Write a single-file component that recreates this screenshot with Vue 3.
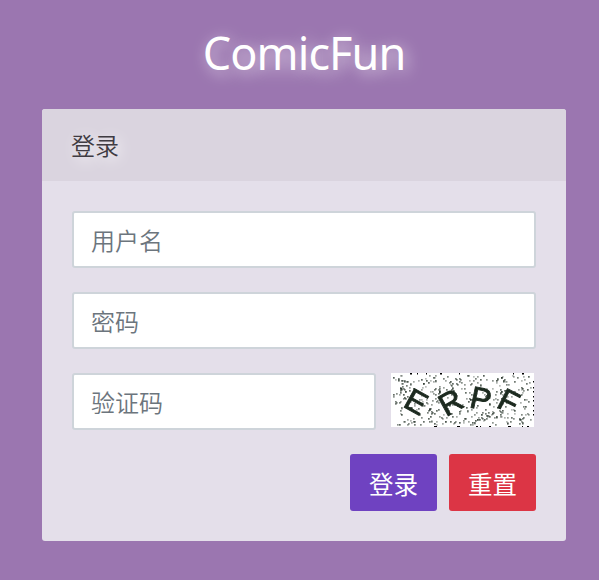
<script setup>
import { ref } from 'vue'

const username = ref('')
const password = ref('')
const code = ref('')

// x / y is the centre of each glyph, rotation in degrees
const glyphs = [
  { char: 'E', x: 25.5, y: 28.5, angle: 29 },
  { char: 'R', x: 59.5, y: 29, angle: -29 },
  { char: 'P', x: 90, y: 25.5, angle: 12 },
  { char: 'F', x: 118, y: 28, angle: 27 },
]

let seed = 7919
function random() {
  seed = (seed * 16807) % 2147483647
  return seed / 2147483647
}

const specks = Array.from({ length: 360 }, () => ({
  x: Math.floor(random() * 138) + 2,
  y: Math.floor(random() * 50) + 2,
  shade: 0.3 + random() * 0.45,
}))

// small clusters where the noise is densest
const centres = [[10, 7], [12, 15], [45, 18], [67, 8], [93, 42], [130, 47], [38, 36], [112, 20]]
for (const [cx, cy] of centres) {
  for (let i = 0; i < 7; i++) {
    specks.push({ x: cx + Math.floor(random() * 7) - 3, y: cy + Math.floor(random() * 7) - 3, shade: 0.6 })
  }
}

const edges = [
  [19, 0, 2], [26, 0, 1], [35, 0, 1], [49, 0, 2], [68, 0, 1], [122, 0, 1], [131, 0, 2],
  [43, 53, 3], [66, 53, 3], [85, 53, 2], [89, 53, 1], [98, 53, 2], [117, 53, 3], [131, 53, 1], [136, 53, 2],
  [142, 8, 1], [142, 14, 1], [142, 18, 1], [142, 23, 1], [142, 27, 1], [142, 32, 1], [142, 37, 1], [142, 41, 1],
]

function reset() {
  username.value = ''
  password.value = ''
  code.value = ''
}
</script>

<template>
  <main class="page">
    <h1 class="brand">ComicFun</h1>
    <section class="card">
      <header class="card-header"><span>登录</span></header>
      <form class="card-body" @submit.prevent @reset.prevent="reset">
        <input v-model="username" class="field" type="text" placeholder="用户名" />
        <input v-model="password" class="field" type="password" placeholder="密码" />
        <div class="code-row">
          <input v-model="code" class="field" type="text" placeholder="验证码" />
          <svg class="captcha" width="143" height="54" viewBox="0 0 143 54">
            <defs>
              <filter id="grain" x="-5%" y="-5%" width="110%" height="110%" color-interpolation-filters="sRGB">
                <feGaussianBlur stdDeviation="0.6" />
              </filter>
              <filter id="soft" x="-5%" y="-5%" width="110%" height="110%" color-interpolation-filters="sRGB">
                <feGaussianBlur stdDeviation="0.7" />
              </filter>
            </defs>
            <rect width="143" height="54" fill="#fff" />
            <g filter="url(#grain)">
              <rect
                v-for="(s, i) in specks"
                :key="i"
                :x="s.x"
                :y="s.y"
                width="1.7"
                height="1.7"
                fill="#1c2a1f"
                :opacity="s.shade"
              />
            </g>
            <g filter="url(#soft)">
              <text
                v-for="g in glyphs"
                :key="g.char"
                class="glyph"
                :transform="`translate(${g.x} ${g.y}) rotate(${g.angle})`"
                y="11"
              >{{ g.char }}</text>
            </g>
            <rect v-for="(e, i) in edges" :key="'e' + i" :x="e[0]" :y="e[1]" :width="e[2]" height="1.5" />
          </svg>
        </div>
        <div class="actions">
          <button class="btn primary" type="submit">登录</button>
          <button class="btn danger" type="reset">重置</button>
        </div>
      </form>
    </section>
  </main>
</template>

<style>
body {
  background: #9b76b0;
}
</style>

<style scoped>
.page {
  box-sizing: border-box;
  height: 580px;
  padding: 18px 33px 0 42px;
  overflow: hidden;
  font-family: "Noto Sans", "Noto Sans CJK SC", sans-serif;
}
.brand {
  margin: 0 0 19px;
  height: 72px;
  line-height: 70px;
  text-align: center;
  font-size: 45px;
  font-weight: 400;
  letter-spacing: -0.9px;
  color: #fff;
  text-shadow: 3px 3px 15px rgba(255, 255, 255, 0.75);
}
.card {
  height: 432px;
  border-radius: 3px;
  background: #e4dfea;
  overflow: hidden;
}
.card-header {
  box-sizing: border-box;
  height: 72px;
  padding: 0 29px;
  line-height: 72px;
  background: #dad4df;
  color: #3f3b42;
  font-family: "Noto Sans CJK SC", sans-serif;
  font-size: 24px;
  font-weight: 350;
  text-shadow: 3px 3px 15px #fff;
}
.card-body {
  display: flex;
  flex-direction: column;
  gap: 24px;
  padding: 30px;
}
.field {
  box-sizing: border-box;
  width: 100%;
  min-width: 0;
  height: 57px;
  margin: 0;
  padding: 0 17px 1px;
  border: 2px solid #ced4da;
  border-radius: 3px;
  outline: none;
  background: #fff;
  color: #495057;
  font-family: "Noto Sans CJK SC", sans-serif;
  font-size: 24px;
  font-weight: 350;
}
.field::placeholder {
  color: #6c757d;
  opacity: 1;
}
.code-row {
  display: flex;
  align-items: flex-start;
  gap: 15px;
}
.code-row .field {
  width: 304px;
}
.captcha {
  flex: none;
  display: block;
}
.glyph {
  font-family: "Liberation Sans", sans-serif;
  font-size: 31px;
  text-anchor: middle;
  fill: #1c2a1f;
  stroke: #1c2a1f;
  stroke-width: 0.9px;
}
.actions {
  display: flex;
  justify-content: flex-end;
  gap: 12px;
}
.btn {
  width: 87px;
  height: 57px;
  padding: 1px 0 0;
  border: 0;
  border-radius: 3px;
  color: #fff;
  font-family: "Noto Sans CJK SC", sans-serif;
  font-size: 24.5px;
}
.primary {
  background: #6f42c1;
}
.danger {
  background: #dc3545;
}
</style>
